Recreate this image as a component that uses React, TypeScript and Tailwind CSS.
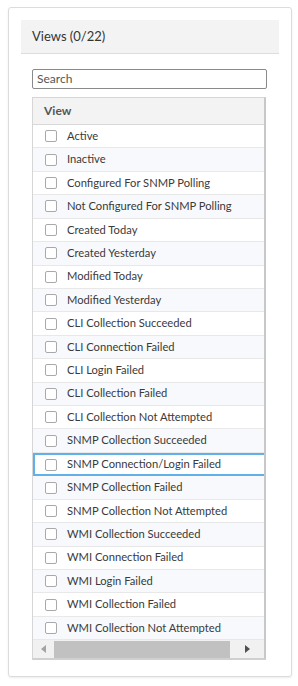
const VIEWS = [
  "Active",
  "Inactive",
  "Configured For SNMP Polling",
  "Not Configured For SNMP Polling",
  "Created Today",
  "Created Yesterday",
  "Modified Today",
  "Modified Yesterday",
  "CLI Collection Succeeded",
  "CLI Connection Failed",
  "CLI Login Failed",
  "CLI Collection Failed",
  "CLI Collection Not Attempted",
  "SNMP Collection Succeeded",
  "SNMP Connection/Login Failed",
  "SNMP Collection Failed",
  "SNMP Collection Not Attempted",
  "WMI Collection Succeeded",
  "WMI Connection Failed",
  "WMI Login Failed",
  "WMI Collection Failed",
  "WMI Collection Not Attempted",
];

const SELECTED = "SNMP Connection/Login Failed";

export default function App() {
  return (
    <div
      className="w-[298px] h-[686px] bg-white pt-[7px] pl-[8px]"
      style={{ fontFamily: 'Lato, "Noto Sans", sans-serif' }}
    >
      <div className="w-[284px] h-[670px] border border-[#dcdcdc] rounded-[3px] shadow-[0_1px_2px_rgba(0,0,0,0.08)] pt-[12px] px-[12px]">
        {/* Panel header */}
        <div className="h-[34px] bg-[#f3f3f3] border-b border-[#dddddd] flex items-center pl-[11px]">
          <span className="text-[13px] text-[#333]">Views (0/22)</span>
        </div>

        <div className="pl-[11px] pr-[12px]">
          {/* Search */}
          <div className="mt-[15px] h-[20px] border border-[#8a8a8a] rounded-[2px] flex items-center pl-[4px]">
            <span className="text-[12px] text-[#555]">Search</span>
          </div>

          {/* Table */}
          <div className="mt-[8px] w-[234px] border border-[#d6d6d6] border-r-[2px] border-r-[#c8c8c8] border-b-[2px] border-b-[#d0d0d0]">
            <div className="h-[27px] bg-[#f2f3f2] border-b border-[#d8d8d8] flex items-center pl-[11px]">
              <span className="text-[12px] font-bold text-[#555]">View</span>
            </div>
            {VIEWS.map((v, i) => {
              const selected = v === SELECTED;
              return (
                <div
                  key={v}
                  className={
                    "h-[23.43px] flex items-center whitespace-nowrap " +
                    (selected
                      ? "border-y-2 border-l-2 border-[#62b0ea] bg-white pl-[10px] "
                      : "border-b border-[#e8e8e8] pl-[12px] ") +
                    (!selected && i % 2 === 1 ? "bg-[#f7f9fc]" : "")
                  }
                >
                  <span className="w-[12px] h-[12px] border border-[#a9a9a9] rounded-[2px] bg-white shrink-0" />
                  <span className="ml-[10px] text-[11.2px] text-[#3a3a3a]">{v}</span>
                </div>
              );
            })}
            {/* Horizontal scrollbar */}
            <div className="h-[18px] bg-[#f1f1f1] flex items-center">
              <div className="w-[21px] flex justify-center">
                <svg width="5" height="8" viewBox="0 0 5 8">
                  <path d="M5 0 L0 4 L5 8 Z" fill="#a3a3a3" />
                </svg>
              </div>
              <div className="w-[176px] h-[17px] bg-[#c1c1c1]" />
              <div className="flex-1 flex justify-center">
                <svg width="5" height="8" viewBox="0 0 5 8">
                  <path d="M0 0 L5 4 L0 8 Z" fill="#505050" />
                </svg>
              </div>
            </div>
          </div>
        </div>
      </div>
    </div>
  );
}
